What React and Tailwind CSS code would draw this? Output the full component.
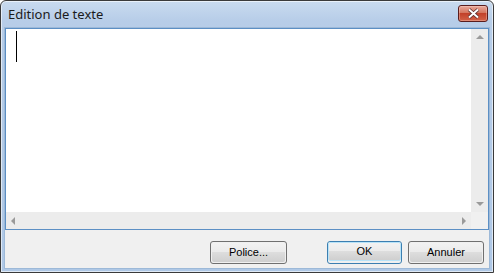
import React from 'react';

const Arrow = ({ dir }) => {
    const pts = {
        up: '0,4 4,0 8,4',
        down: '0,0 4,4 8,0',
        left: '4,0 0,4 4,8',
        right: '0,0 4,4 0,8',
    }[dir];
    const vert = dir === 'up' || dir === 'down';
    return (
        <svg width={vert ? 8 : 4} height={vert ? 4 : 8} viewBox={vert ? '0 0 8 4' : '0 0 4 8'}>
            <polygon points={pts} fill="#9a9a9a" />
        </svg>
    );
};

const Button = ({ children, focused, className = '' }) => (
    <div
        className={`h-[23px] rounded-[3px] border ${focused ? 'border-[#3c7fb1]' : 'border-[#707070]'} p-px ${className}`}
    >
        <div
            className={`flex h-full items-center justify-center rounded-[2px] ${focused ? 'border border-[#b8e3f8] -m-px' : ''} bg-[linear-gradient(#f2f2f2_0%,#ebebeb_45%,#dddddd_50%,#cfcfcf_100%)] text-[11px] text-black`}
            style={{ fontFamily: '"Liberation Sans", Arial, sans-serif' }}
        >
            {children}
        </div>
    </div>
);

export default function App() {
    return (
        <div className="h-[273px] w-[494px] overflow-hidden bg-white">
            <div className="flex h-full flex-col rounded-t-[6px] border border-[#3a3a3a] bg-[linear-gradient(#c9dbef_0px,#b7cde8_20px,#afc8e6_273px)] shadow-[inset_0_0_0_1px_rgba(255,255,255,0.6)]">
                {/* title bar */}
                <div className="flex h-[26px] shrink-0 items-start justify-between pl-[7px] pr-[5px]">
                    <span
                        className="mt-[5px] text-[13px] leading-[16px] text-[#1b1b1b]"
                        style={{ fontFamily: '"Noto Sans", "Open Sans", sans-serif' }}
                    >
                        Edition de texte
                    </span>
                    <div className="mt-[4px] flex h-[17px] w-[30px] items-center justify-center rounded-[3px] border border-[#5a1d1d] bg-[linear-gradient(#e9a99c_0%,#d4765f_45%,#c2412a_50%,#d26248_100%)] shadow-[inset_0_0_0_1px_rgba(255,220,210,0.35)]">
                        <svg width="13" height="11" viewBox="0 0 13 11">
                            <path
                                d="M2 1.5 L6.5 5.5 L11 1.5 M2 9.5 L6.5 5.5 L11 9.5"
                                stroke="#5a3030"
                                strokeWidth="3.6"
                                fill="none"
                            />
                            <path
                                d="M2 1.5 L6.5 5.5 L11 1.5 M2 9.5 L6.5 5.5 L11 9.5"
                                stroke="#ffffff"
                                strokeWidth="2"
                                fill="none"
                            />
                        </svg>
                    </div>
                </div>

                {/* client area */}
                <div className="mx-[3px] mb-[3px] flex flex-1 flex-col border border-[#9db9d8] bg-[#f0f0f0]">
                    <div className="flex h-[202px] shrink-0 flex-col border border-[#5c8fc4] bg-white">
                        <div className="flex flex-1">
                            <div className="relative flex-1">
                                <div className="absolute left-[10px] top-[2px] h-[31px] w-px bg-black" />
                            </div>
                            <div className="flex w-[17px] flex-col items-center justify-between bg-[#ececec] py-[6px]">
                                <Arrow dir="up" />
                                <Arrow dir="down" />
                            </div>
                        </div>
                        <div className="flex h-[17px]">
                            <div className="flex flex-1 items-center justify-between bg-[#ececec] px-[5px]">
                                <Arrow dir="left" />
                                <Arrow dir="right" />
                            </div>
                            <div className="w-[17px] bg-[#f0f0f0]" />
                        </div>
                    </div>
                    <div className="flex flex-1 items-start pl-[205px] pr-[3px] pt-[11px]">
                        <Button className="w-[77px]">Police...</Button>
                        <Button focused className="ml-[40px] w-[75px]">OK</Button>
                        <Button className="ml-[6px] w-[76px]">Annuler</Button>
                    </div>
                </div>
            </div>
        </div>
    );
}
